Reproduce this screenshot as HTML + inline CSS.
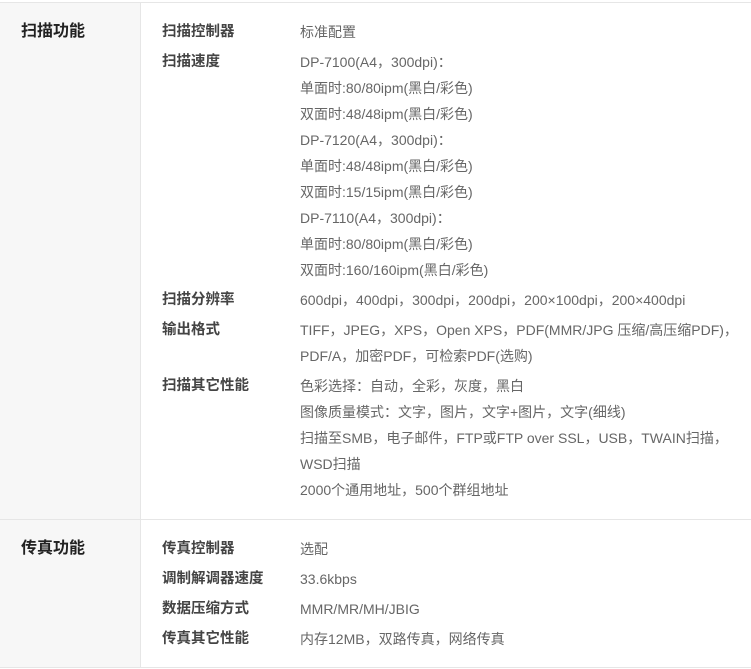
<!DOCTYPE html>
<html><head><meta charset="utf-8"><style>
*{margin:0;padding:0;box-sizing:border-box}
body{width:751px;height:669px;background:#fff;font-family:"Liberation Sans","Noto Sans CJK SC",sans-serif;overflow:hidden}
.sec{position:absolute;left:0;width:751px;border-top:1px solid #e6e6e6}
.hd{position:absolute;left:0;top:0;bottom:0;width:141px;background:#f7f7f7;border-right:1px solid #e6e6e6}
.hd span{position:absolute;left:21px;top:16px;line-height:26px;font-size:16px;font-weight:bold;color:#222}
.rows{position:absolute;left:162px;top:16px}
.r{display:flex;padding-bottom:4px;line-height:26px;white-space:nowrap}
.l{width:138px;font-size:14.5px;font-weight:bold;color:#444}
.v{font-size:14px;color:#666}
</style></head><body>
<div class="sec" style="top:2px;height:517px">
<div class="hd"><span>扫描功能</span></div>
<div class="rows">
<div class="r"><div class="l">扫描控制器</div><div class="v">标准配置</div></div>
<div class="r"><div class="l">扫描速度</div><div class="v">DP-7100(A4，300dpi)：<br>单面时:80/80ipm(黑白/彩色)<br>双面时:48/48ipm(黑白/彩色)<br>DP-7120(A4，300dpi)：<br>单面时:48/48ipm(黑白/彩色)<br>双面时:15/15ipm(黑白/彩色)<br>DP-7110(A4，300dpi)：<br>单面时:80/80ipm(黑白/彩色)<br>双面时:160/160ipm(黑白/彩色)</div></div>
<div class="r"><div class="l">扫描分辨率</div><div class="v">600dpi，400dpi，300dpi，200dpi，200×100dpi，200×400dpi</div></div>
<div class="r"><div class="l">输出格式</div><div class="v">TIFF，JPEG，XPS，Open XPS，PDF(MMR/JPG 压缩/高压缩PDF)，<br>PDF/A，加密PDF，可检索PDF(选购)</div></div>
<div class="r"><div class="l">扫描其它性能</div><div class="v">色彩选择：自动，全彩，灰度，黑白<br>图像质量模式：文字，图片，文字+图片，文字(细线)<br>扫描至SMB，电子邮件，FTP或FTP over SSL，USB，TWAIN扫描，<br>WSD扫描<br>2000个通用地址，500个群组地址</div></div>
</div></div>
<div class="sec" style="top:519px;height:149px;border-bottom:1px solid #e6e6e6">
<div class="hd"><span>传真功能</span></div>
<div class="rows">
<div class="r"><div class="l">传真控制器</div><div class="v">选配</div></div>
<div class="r"><div class="l">调制解调器速度</div><div class="v">33.6kbps</div></div>
<div class="r"><div class="l">数据压缩方式</div><div class="v">MMR/MR/MH/JBIG</div></div>
<div class="r"><div class="l">传真其它性能</div><div class="v">内存12MB，双路传真，网络传真</div></div>
</div></div>
</body></html>
